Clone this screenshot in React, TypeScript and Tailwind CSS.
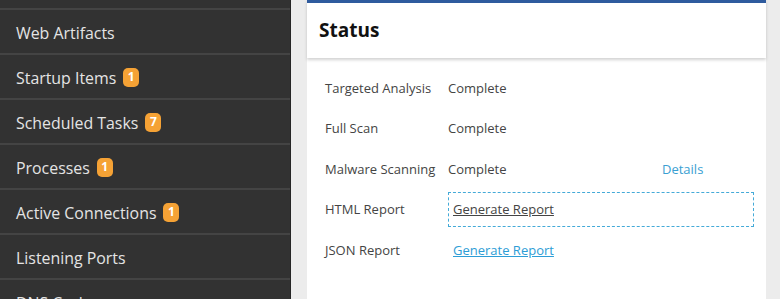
import React from "react";

const items: { label: string; badge?: string }[] = [
  { label: "Web Artifacts" },
  { label: "Startup Items", badge: "1" },
  { label: "Scheduled Tasks", badge: "7" },
  { label: "Processes", badge: "1" },
  { label: "Active Connections", badge: "1" },
  { label: "Listening Ports" },
  { label: "DNS Cache" },
];

export default function App() {
  const font = { fontFamily: '"Segoe UI", "Open Sans", sans-serif' };
  return (
    <div className="flex h-[299px] w-[780px] overflow-hidden" style={font}>
      <div className="w-[291px] shrink-0 bg-[#323232] border-r border-[#262626] flex flex-col">
        <div className="h-[10px] shrink-0 border-b-2 border-[#444444]" />
        {items.map((it) => (
          <div
            key={it.label}
            className="h-[45px] shrink-0 border-b-2 border-[#444444] flex items-center pl-[16px] gap-[7px]"
          >
            <span className="text-[15.9px] leading-[20px] text-[#e4e4e4] pt-[2px]">{it.label}</span>
            {it.badge && (
              <span className="h-[19px] min-w-[16px] px-[4px] rounded-[5px] bg-[#f5a235] text-white text-[12px] font-bold flex items-center justify-center leading-none mt-[1px]">
                {it.badge}
              </span>
            )}
          </div>
        ))}
      </div>
      <div className="flex-1 bg-[#ececec] pl-[16px] pr-[14px]">
        <div className="h-full flex flex-col">
          <div className="relative z-10 bg-white border-t-[3px] border-[#2f5b9e] h-[58px] flex items-center pl-[12px] shadow-[0_2px_3px_rgba(0,0,0,0.18)]">
            <span className="text-[19px] font-bold text-[#111]">Status</span>
          </div>
          <div className="flex-1 bg-white pt-[10px] pl-[18px] pr-[12px] text-[13px] text-[#444]">
            <Row label="Targeted Analysis" value="Complete" />
            <Row label="Full Scan" value="Complete" />
            <Row
              label="Malware Scanning"
              value="Complete"
              extra={<span className="text-[#3aa0d2]">Details</span>}
            />
            <div className="h-[40.5px] flex items-center">
              <div className="w-[123px] shrink-0">HTML Report</div>
              <div className="flex-1 h-[35px] border border-dashed border-[#44aad8] flex items-center pl-[4px]">
                <span className="underline text-[#444]">Generate Report</span>
              </div>
            </div>
            <div className="h-[40.5px] flex items-center">
              <div className="w-[123px] shrink-0">JSON Report</div>
              <div className="flex-1 pl-[5px]">
                <span className="underline text-[#2d9dd6]">Generate Report</span>
              </div>
            </div>
          </div>
        </div>
      </div>
    </div>
  );
}

function Row({ label, value, extra }: { label: string; value: string; extra?: React.ReactNode }) {
  return (
    <div className="h-[40.5px] flex items-center">
      <div className="w-[123px] shrink-0">{label}</div>
      <div className="w-[214px] shrink-0">{value}</div>
      <div>{extra}</div>
    </div>
  );
}
